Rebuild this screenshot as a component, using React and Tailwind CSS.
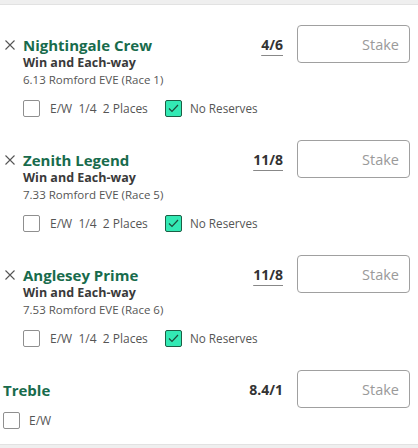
const selections = [
  { name: 'Nightingale Crew', odds: '4/6', race: '6.13 Romford EVE (Race 1)' },
  { name: 'Zenith Legend', odds: '11/8', race: '7.33 Romford EVE (Race 5)' },
  { name: 'Anglesey Prime', odds: '11/8', race: '7.53 Romford EVE (Race 6)' },
]

function Box({ checked }) {
  if (checked) {
    return (
      <span className="flex h-[17px] w-[17px] shrink-0 items-center justify-center rounded-[2px] border border-[#1d5e45] bg-[#33e9b4]">
        <svg width="11" height="9" viewBox="0 0 11 9" fill="none">
          <path d="M1 4.5 L4 7.5 L10 1" stroke="#1d4a3a" strokeWidth="1.2" />
        </svg>
      </span>
    )
  }
  return <span className="block h-[17px] w-[17px] shrink-0 rounded-[2px] border border-[#8f8f8f] bg-white" />
}

function StakeInput() {
  return (
    <input
      placeholder="Stake"
      className="h-[38px] w-[113px] rounded-[4px] border border-[#a0a0a0] bg-white pr-[10px] text-right text-[14.5px] text-[#333] placeholder:text-[#9a9a9a] focus:outline-none"
    />
  )
}

function Selection({ s }) {
  return (
    <div className="flex pt-5 pb-[3px]">
      <div className="min-w-0 flex-1 whitespace-nowrap pt-[10px]">
        <div className="flex h-5 items-center">
          <svg className="ml-[5px] mr-[8px]" width="10" height="10" viewBox="0 0 10 10" fill="none">
            <path d="M0.5 0.5 L9.5 9.5 M9.5 0.5 L0.5 9.5" stroke="#555" strokeWidth="1.1" />
          </svg>
          <span className="text-[15px] font-bold text-[#186b4c]">{s.name}</span>
        </div>
        <div className="pl-[23px]">
          <div className="h-4 text-[12.5px] leading-4 font-bold text-[#3a3a3a]">Win and Each-way</div>
          <div className="mt-[1px] h-4 text-[11.5px] leading-4 text-[#555]">{s.race}</div>
          <div className="mt-[12px] flex h-[17px] items-center text-[12px] text-[#555]">
            <Box />
            <span className="ml-[10px] w-[115px] shrink-0 whitespace-pre">E/W  1/4  2 Places</span>
            <Box checked />
            <span className="ml-[8px] shrink-0 text-[11.7px]">No Reserves</span>
          </div>
        </div>
      </div>
      <div className="flex h-[38px] shrink-0 items-center gap-[14px] pr-2">
        <span className="text-[14px] font-bold text-[#333] underline decoration-[#888] underline-offset-[5px]">{s.odds}</span>
        <StakeInput />
      </div>
    </div>
  )
}

export default function App() {
  return (
    <div className="min-h-[448px] bg-white" style={{ fontFamily: '"Open Sans", sans-serif' }}>
      <div className="h-[5px] border-b border-[#e2e2e2] bg-[#efefef]" />
      {selections.map(s => (
        <Selection key={s.name} s={s} />
      ))}
      <div className="flex pt-5 pb-[15px]">
        <div className="flex-1 pt-[10px]">
          <div className="flex h-5 items-center pl-[3px]">
            <span className="text-[15px] font-bold text-[#186b4c]">Treble</span>
          </div>
          <div className="mt-[12px] flex h-[17px] items-center pl-[3px] text-[12px] text-[#555]">
            <Box />
            <span className="ml-[9px]">E/W</span>
          </div>
        </div>
        <div className="flex h-[38px] shrink-0 items-center gap-[14px] pr-2">
          <span className="text-[14px] font-bold text-[#333]">8.4/1</span>
          <StakeInput />
        </div>
      </div>
      <div className="h-[4px] border-t border-[#e2e2e2] bg-[#efefef]" />
    </div>
  )
}
